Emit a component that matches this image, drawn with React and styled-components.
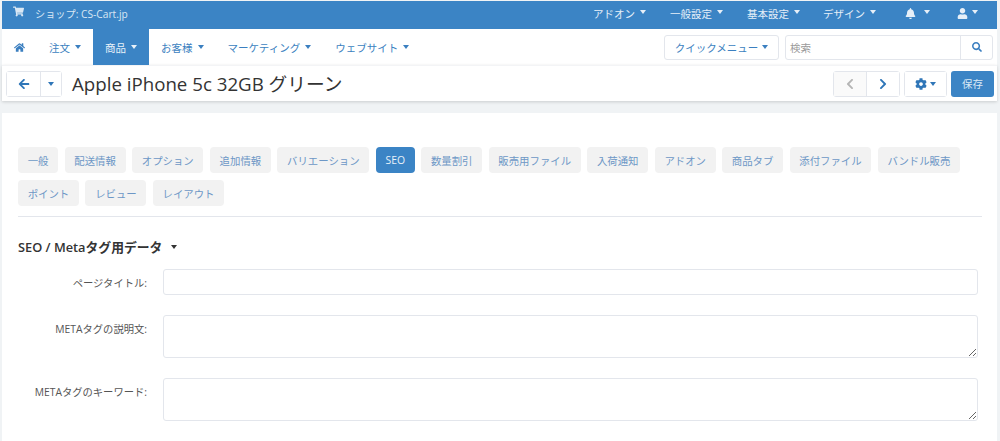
import React from "react";
import styled, { createGlobalStyle } from "styled-components";
import {
  FaHome,
  FaShoppingCart,
  FaBell,
  FaUser,
  FaArrowLeft,
  FaChevronLeft,
  FaChevronRight,
  FaCog,
  FaSearch,
} from "react-icons/fa";

const blue = "#3b84c5";
const link = "#3b7fc0";
const line = "#e3e6ec";

const GlobalStyle = createGlobalStyle`
  html, body {
    margin: 0;
    height: 441px;
    overflow: hidden;
    background: #f0f3f5;
    font-family: "Open Sans", "Noto Sans CJK JP", sans-serif;
  }
`;

const Page = styled.div`
  padding: 1px 3px 0 2px;
  height: 440px;
  overflow: hidden;
`;

const TopBar = styled.div`
  display: flex;
  justify-content: space-between;
  align-items: center;
  height: 28px;
  background: ${blue};
  color: #d9e7f4;
  font-size: 10.5px;
  padding: 0 19px 4px 11px;
  box-sizing: border-box;
`;

const ShopName = styled.div`
  display: flex;
  align-items: center;
  gap: 11px;
  font-size: 10.2px;
  svg {
    font-size: 11px;
    margin-bottom: 4px;
  }
`;

const TopMenu = styled.div`
  display: flex;
  align-items: center;
`;

const TopItem = styled.div`
  display: flex;
  align-items: center;
  gap: ${(p) => p.$inner}px;
  margin-left: ${(p) => p.$gap}px;
  color: #e6eff8;
  svg {
    font-size: 11px;
  }
`;

const Caret = styled.span`
  display: inline-block;
  width: 0;
  height: 0;
  margin-bottom: ${(p) => p.$lift || 0}px;
  border-left: 3.5px solid transparent;
  border-right: 3.5px solid transparent;
  border-top: 4px solid ${(p) => p.$color || "currentColor"};
`;

const NavBar = styled.div`
  display: flex;
  justify-content: space-between;
  align-items: center;
  height: 36px;
  background: #fff;
  padding-right: 4px;
`;

const NavList = styled.div`
  display: flex;
  align-items: stretch;
  height: 36px;
`;

const NavItem = styled.div`
  display: flex;
  align-items: center;
  gap: 5px;
  padding: 0 12px;
  font-size: 10.5px;
  color: ${(p) => (p.$active ? "#e8f1f9" : link)};
  background: ${(p) => (p.$active ? blue : "transparent")};
  svg {
    font-size: 11px;
  }
`;

const NavTools = styled.div`
  display: flex;
  align-items: center;
  gap: 6px;
`;

const QuickMenu = styled.div`
  display: flex;
  align-items: center;
  justify-content: center;
  gap: 4px;
  width: 115px;
  height: 25px;
  box-sizing: border-box;
  border: 1px solid ${line};
  border-radius: 3px;
  color: ${link};
  font-size: 10.5px;
`;

const SearchBox = styled.div`
  display: flex;
  width: 208px;
  height: 25px;
  box-sizing: border-box;
  border: 1px solid ${line};
  border-radius: 3px;
`;

const SearchText = styled.div`
  flex: 1;
  display: flex;
  align-items: center;
  padding-left: 4px;
  color: #9a9a9a;
  font-size: 10.5px;
`;

const SearchButton = styled.div`
  display: flex;
  align-items: center;
  justify-content: center;
  width: 31px;
  border-left: 1px solid ${line};
  color: ${link};
  font-size: 10px;
`;

const ToolBar = styled.div`
  display: flex;
  justify-content: space-between;
  align-items: center;
  height: 36px;
  background: #fff;
  border-top: 1px solid #f3f4f6;
  padding: 0 3px 0 4px;
  box-sizing: border-box;
  box-shadow: 0 1px 3px rgba(0, 0, 0, 0.16);
`;

const ToolLeft = styled.div`
  display: flex;
  align-items: center;
`;

const ToolRight = styled.div`
  display: flex;
  align-items: center;
  gap: 4px;
`;

const BtnGroup = styled.div`
  display: flex;
  height: 26px;
  border: 1px solid ${line};
  border-radius: 3px;
  box-sizing: border-box;
  background: #fff;
`;

const GroupCell = styled.div`
  display: flex;
  align-items: center;
  justify-content: center;
  gap: 3px;
  width: ${(p) => p.$w}px;
  color: ${(p) => (p.$off ? "#b5b5b5" : "#2f76b8")};
  background: ${(p) => (p.$off ? "#fafafa" : "#fff")};
  font-size: 12px;
  & + & {
    border-left: 1px solid ${line};
  }
`;

const Title = styled.h1`
  margin: 0 0 0 10px;
  font-size: 18.7px;
  font-weight: 400;
  color: #333;
  line-height: 26px;
`;

const SaveButton = styled.div`
  display: flex;
  align-items: center;
  justify-content: center;
  width: 43px;
  height: 26px;
  background: ${blue};
  color: #dce9f5;
  border-radius: 3px;
  font-size: 10.5px;
`;

const Panel = styled.div`
  margin-top: 12px;
  height: 330px;
  background: #fff;
  padding: 34px 15px 0 16px;
  box-sizing: border-box;
`;

const Tabs = styled.div`
  display: flex;
  flex-wrap: wrap;
  gap: 7px 6.5px;
  padding-bottom: 10px;
  border-bottom: 1px solid ${line};
  margin-bottom: 21px;
`;

const Tab = styled.div`
  display: flex;
  align-items: center;
  height: 26px;
  padding: 0 9.7px;
  border-radius: 4px;
  font-size: 10.4px;
  background: ${(p) => (p.$active ? blue : "#f2f2f2")};
  color: ${(p) => (p.$active ? "#e8f1f9" : "#6d97c6")};
`;

const SectionTitle = styled.h2`
  display: flex;
  align-items: center;
  gap: 9px;
  margin: 0 0 13px;
  font-size: 12.8px;
  font-weight: 600;
  line-height: 18px;
  color: #333;
`;

const Field = styled.div`
  display: flex;
  margin-bottom: 20px;
  padding-right: 4px;
`;

const Label = styled.label`
  flex: 0 0 129px;
  margin-right: 16px;
  text-align: right;
  padding-top: 7px;
  font-size: 10.3px;
  line-height: 15px;
  color: #555;
`;

const TextInput = styled.input`
  flex: 1;
  height: 26px;
  box-sizing: border-box;
  border: 1px solid ${line};
  border-radius: 3px;
  outline: none;
  background: #fff;
`;

const TextArea = styled.textarea`
  flex: 1;
  height: 43px;
  box-sizing: border-box;
  border: 1px solid ${line};
  border-radius: 3px;
  outline: none;
  background: #fff;
`;

const topItems = [
  { label: "アドオン", gap: 0 },
  { label: "一般設定", gap: 24 },
  { label: "基本設定", gap: 24 },
  { label: "デザイン", gap: 23 },
];

const navItems = ["注文", "商品", "お客様", "マーケティング", "ウェブサイト"];

const tabs = [
  "一般",
  "配送情報",
  "オプション",
  "追加情報",
  "バリエーション",
  "SEO",
  "数量割引",
  "販売用ファイル",
  "入荷通知",
  "アドオン",
  "商品タブ",
  "添付ファイル",
  "バンドル販売",
  "ポイント",
  "レビュー",
  "レイアウト",
];

export default function App() {
  return (
    <Page>
      <GlobalStyle />
      <TopBar>
        <ShopName>
          <FaShoppingCart />
          <span>ショップ: CS-Cart.jp</span>
        </ShopName>
        <TopMenu>
          {topItems.map((item) => (
            <TopItem key={item.label} $gap={item.gap} $inner={5}>
              {item.label}
              <Caret $lift={2} />
            </TopItem>
          ))}
          <TopItem $inner={8} $gap={29}>
            <FaBell />
            <Caret $lift={2} />
          </TopItem>
          <TopItem $inner={4} $gap={27}>
            <FaUser />
            <Caret $lift={2} />
          </TopItem>
        </TopMenu>
      </TopBar>
      <NavBar>
        <NavList>
          <NavItem>
            <FaHome />
          </NavItem>
          {navItems.map((name) => (
            <NavItem key={name} $active={name === "商品"}>
              {name}
              <Caret />
            </NavItem>
          ))}
        </NavList>
        <NavTools>
          <QuickMenu>
            クイックメニュー
            <Caret $lift={1} />
          </QuickMenu>
          <SearchBox>
            <SearchText>検索</SearchText>
            <SearchButton>
              <FaSearch />
            </SearchButton>
          </SearchBox>
        </NavTools>
      </NavBar>
      <ToolBar>
        <ToolLeft>
          <BtnGroup>
            <GroupCell $w={33}>
              <FaArrowLeft />
            </GroupCell>
            <GroupCell $w={20}>
              <Caret />
            </GroupCell>
          </BtnGroup>
          <Title>Apple iPhone 5c 32GB グリーン</Title>
        </ToolLeft>
        <ToolRight>
          <BtnGroup>
            <GroupCell $w={32} $off>
              <FaChevronLeft />
            </GroupCell>
            <GroupCell $w={32}>
              <FaChevronRight />
            </GroupCell>
          </BtnGroup>
          <BtnGroup>
            <GroupCell $w={41}>
              <FaCog />
              <Caret />
            </GroupCell>
          </BtnGroup>
          <SaveButton>保存</SaveButton>
        </ToolRight>
      </ToolBar>
      <Panel>
        <Tabs>
          {tabs.map((t) => (
            <Tab key={t} $active={t === "SEO"}>
              {t}
            </Tab>
          ))}
        </Tabs>
        <SectionTitle>
          SEO / Metaタグ用データ
          <Caret $color="#333" />
        </SectionTitle>
        <Field>
          <Label>ページタイトル:</Label>
          <TextInput />
        </Field>
        <Field>
          <Label>METAタグの説明文:</Label>
          <TextArea />
        </Field>
        <Field>
          <Label>METAタグのキーワード:</Label>
          <TextArea />
        </Field>
      </Panel>
    </Page>
  );
}
